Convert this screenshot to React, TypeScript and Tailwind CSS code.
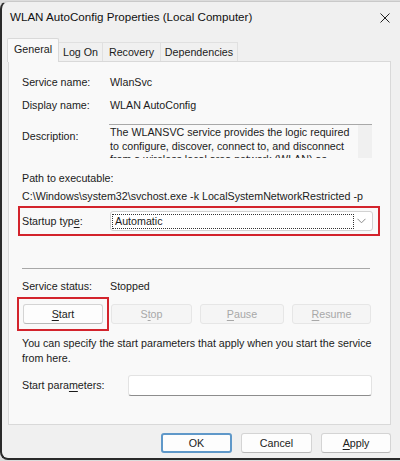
import React from "react";

const font = { fontFamily: '"Liberation Sans", Arial, sans-serif' };

function Btn({
  label,
  width,
  disabled,
  primary,
}: {
  label: React.ReactNode;
  width: string;
  disabled?: boolean;
  primary?: boolean;
}) {
  if (disabled) {
    return (
      <div
        className={`${width} h-[20px] flex items-center justify-center rounded-[3px] border border-[#e6e6e6] bg-[#f5f5f5] text-[#a8a8a8]`}
      >
        {label}
      </div>
    );
  }
  return (
    <div
      className={`${width} h-[20px] flex items-center justify-center rounded-[3px] bg-[#fdfdfd] text-[#1b1b1b] ${
        primary
          ? "border-2 border-[#5f98c9]"
          : "border border-[#d4d4d4] border-b-[#b8b8b8]"
      }`}
    >
      {label}
    </div>
  );
}

function U({ children }: { children: React.ReactNode }) {
  return <span className="underline underline-offset-2">{children}</span>;
}

export default function App() {
  return (
    <div className="w-[400px] h-[461px] bg-[#dcdcdc] text-[10.7px] text-[#1b1b1b]" style={font}>
      <div className="h-[460px] pt-px">
        <div className="h-[459px] bg-[#f0f0f0] border-l-2 border-b-2 border-[#2a2a2a] border-t border-t-[#c9c9c9] rounded-tl-[8px] rounded-bl-[8px] flex flex-col">
          {/* title bar */}
          <div className="h-[30px] flex items-center justify-between pl-[8px] pr-[10px]">
            <span className="text-[11.6px] text-[#111]">WLAN AutoConfig Properties (Local Computer)</span>
            <svg width="10" height="10" viewBox="0 0 10 10" className="mt-px">
              <path d="M0.5 0.5L9.5 9.5M9.5 0.5L0.5 9.5" stroke="#222" strokeWidth="1" />
            </svg>
          </div>

          {/* tabs */}
          <div className="h-[29px] flex items-end pl-[5px]">
            <div className="relative z-10 -mb-px w-[52px] h-[24px] flex items-center justify-center bg-[#f9f9f9] border border-b-0 border-[#d9d9d9] rounded-t-[2px] pb-[2px]">
              General
            </div>
            <div className="w-[44px] h-[19px] flex items-center justify-center border-t border-r border-[#e0e0e0] bg-[#f0f0f0]">
              Log On
            </div>
            <div className="w-[58px] h-[19px] flex items-center justify-center border-t border-r border-[#e0e0e0] bg-[#f0f0f0]">
              Recovery
            </div>
            <div className="w-[77px] h-[19px] flex items-center justify-center border-t border-r border-[#e0e0e0] bg-[#f0f0f0]">
              Dependencies
            </div>
          </div>

          {/* panel */}
          <div className="ml-[6px] w-[383px] h-[364px] bg-[#f9f9f9] border border-[#d9d9d9] pl-[13px] pr-[17px]">
            <div className="mt-[12px] flex h-[16px] items-center">
              <span className="w-[88px]">Service name:</span>
              <span>WlanSvc</span>
            </div>
            <div className="mt-[7px] flex h-[16px] items-center">
              <span className="w-[88px]">Display name:</span>
              <span>WLAN AutoConfig</span>
            </div>
            <div className="mt-[11px] flex items-start">
              <span className="w-[87px] mt-[4px] leading-[16px]">Description:</span>
              <div className="w-[263px] h-[34px] border-t border-[#a8a8a8] flex overflow-hidden">
                <div className="flex-1 pl-[1px] leading-[13.5px] pt-[1px]">
                  The WLANSVC service provides the logic required to configure, discover, connect to, and disconnect
                  from a wireless local area network (WLAN) as
                </div>
                <div className="w-[14px] bg-[#f0f0f0]" />
              </div>
            </div>
            <div className="mt-[12px] h-[16px] flex items-center">Path to executable:</div>
            <div className="mt-[2px] h-[16px] flex items-center whitespace-nowrap">
              C:\Windows\system32\svchost.exe -k LocalSystemNetworkRestricted -p
            </div>

            {/* startup type, marked */}
            <div className="mt-[2px] -ml-[4px] w-[362px] h-[30px] border-2 border-[#d3232c] flex items-center pl-[2px]">
              <span className="w-[88px]">
                Startup typ<U>e</U>:
              </span>
              <div className="w-[263px] h-[20px] bg-white border border-[#d2d2d2] rounded-[3px] flex items-center pl-[1px] pr-[6px]">
                <div className="w-[242px] h-[15px] border border-dotted border-[#333] flex items-center pl-[2px]">
                  Automatic
                </div>
                <div className="flex-1 flex justify-end">
                  <svg width="9" height="6" viewBox="0 0 9 6">
                    <path d="M0.5 0.8L4.5 4.8L8.5 0.8" fill="none" stroke="#8a8a8a" strokeWidth="1" />
                  </svg>
                </div>
              </div>
            </div>

            <div className="mt-[32px] w-[348px] h-px bg-[#a8a8a8]" />

            <div className="mt-[9px] flex h-[16px] items-center">
              <span className="w-[88px]">Service status:</span>
              <span>Stopped</span>
            </div>

            <div className="mt-[3px] flex items-center">
              <div className="-ml-[5px] w-[92px] h-[34px] border-2 border-[#d3232c] flex items-center pl-[4px]">
                <Btn label={<><U>S</U>tart</>} width="w-[80px]" />
              </div>
              <div className="ml-[2px]">
                <Btn label={<>S<U>t</U>op</>} width="w-[81px]" disabled />
              </div>
              <div className="ml-[8px]">
                <Btn label={<><U>P</U>ause</>} width="w-[84px]" disabled />
              </div>
              <div className="ml-[8px]">
                <Btn label={<><U>R</U>esume</>} width="w-[79px]" disabled />
              </div>
            </div>

            <div className="mt-[5px] leading-[15px] whitespace-nowrap">
              You can specify the start parameters that apply when you start the service
              <br />
              from here.
            </div>

            <div className="mt-[9px] flex items-center">
              <span className="w-[106px]">
                Start para<U>m</U>eters:
              </span>
              <div className="w-[244px] h-[21px] bg-white border border-[#e3e3e3] border-b-[#8d8d8d] rounded-[3px]" />
            </div>
          </div>

          {/* footer buttons */}
          <div className="mt-[8px] w-[389px] flex justify-end gap-[9px]">
            <Btn label="OK" width="w-[71px]" primary />
            <Btn label="Cancel" width="w-[71px]" />
            <Btn label={<><U>A</U>pply</>} width="w-[70px]" />
          </div>
        </div>
      </div>
    </div>
  );
}
